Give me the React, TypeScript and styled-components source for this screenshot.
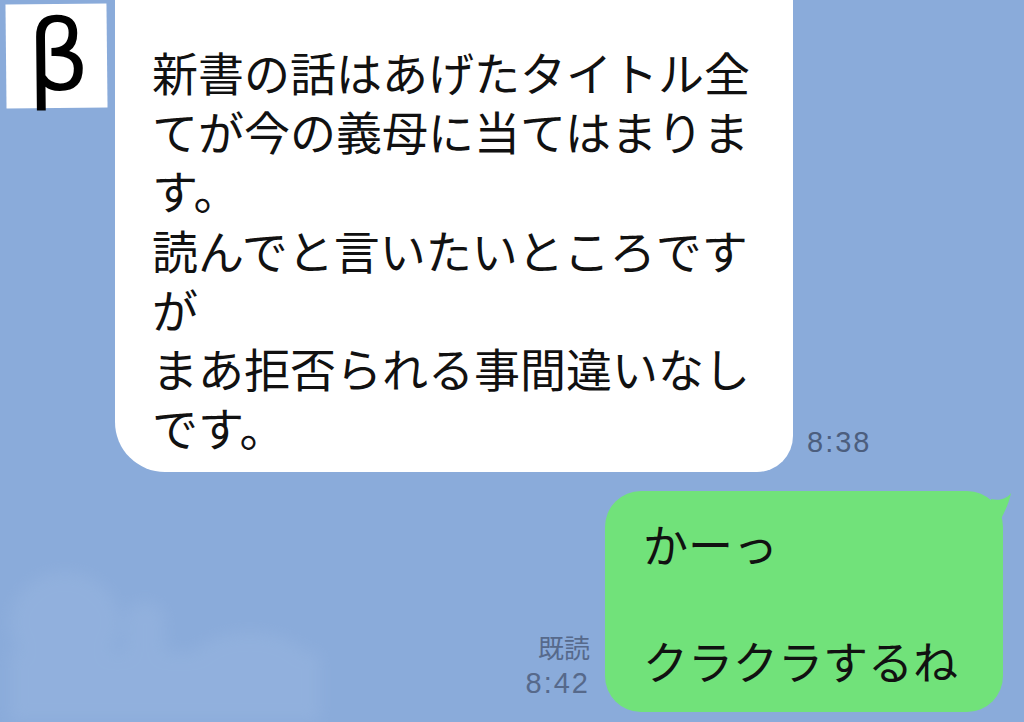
import * as React from "react";
import styled, { createGlobalStyle } from "styled-components";

const GlobalStyle = createGlobalStyle`
  html, body {
    margin: 0;
    padding: 0;
    background: #8aabda;
  }
  #root {
    width: 1024px;
    height: 722px;
  }
`;

const JP_FONT = `"Noto Sans CJK JP", "Noto Sans", sans-serif`;

const Chat = styled.div`
  position: relative;
  width: 1024px;
  height: 722px;
  overflow: hidden;
  background: #8aabda;
  display: flex;
  flex-direction: column;
  font-family: ${JP_FONT};
`;

const Clouds = styled.svg`
  position: absolute;
  left: 0;
  bottom: 0;
  pointer-events: none;
`;

const Row = styled.div<{ $mine?: boolean }>`
  position: relative;
  display: flex;
  align-items: flex-end;
  justify-content: ${(p) => (p.$mine ? "flex-end" : "flex-start")};
  padding: ${(p) => (p.$mine ? "19px 21px 0 0" : "0 0 0 6px")};
`;

const Avatar = styled.div`
  align-self: flex-start;
  margin-top: 4px;
  width: 101px;
  height: 104px;
  background: #fff;
  transform: rotate(-0.6deg);
  display: flex;
  align-items: center;
  justify-content: center;
  padding-left: 4px;
  box-sizing: border-box;
  font-family: "DejaVu Sans", sans-serif;
  font-size: 98px;
  line-height: 96px;
  color: #000;
`;

const Bubble = styled.div<{ $mine?: boolean }>`
  position: relative;
  box-sizing: border-box;
  white-space: pre;
  color: #111;
  background: ${(p) => (p.$mine ? "#71e27a" : "#ffffff")};
  font-size: ${(p) => (p.$mine ? "45px" : "46px")};
  line-height: ${(p) => (p.$mine ? "58.5px" : "59.2px")};
  width: ${(p) => (p.$mine ? "398px" : "678px")};
  padding: ${(p) => (p.$mine ? "24px 0 21px 38px" : "42px 0 16px 37px")};
  margin-left: ${(p) => (p.$mine ? "0" : "8px")};
  border-radius: ${(p) => (p.$mine ? "36px" : "0 0 36px 50px")};
`;

const Tail = styled.svg`
  position: absolute;
  right: -12px;
  top: 2px;
`;

const Meta = styled.div<{ $mine?: boolean }>`
  display: flex;
  flex-direction: column;
  align-items: flex-end;
  color: ${(p) => (p.$mine ? "#56698b" : "#4c5e7e")};
  margin: ${(p) => (p.$mine ? "0 15px 11px 0" : "0 0 12px 14px")};
`;

const ReadMark = styled.span`
  font-family: ${JP_FONT};
  font-size: 26px;
  line-height: 36px;
`;

const Time = styled.span`
  font-family: "Liberation Sans", Arial, sans-serif;
  font-size: 29px;
  letter-spacing: 2px;
  line-height: 36px;
`;

const received = `新書の話はあげたタイトル全
てが今の義母に当てはまりま
す。
読んでと言いたいところです
が
まあ拒否られる事間違いなし
です。`;

const sent = `かーっ

クラクラするね`;

export default function App() {
  return (
    <>
      <GlobalStyle />
      <Chat>
        <Clouds width="420" height="190" viewBox="0 0 420 190">
          <defs>
            <filter id="soft" x="-20%" y="-20%" width="140%" height="140%">
              <feGaussianBlur stdDeviation="8" />
            </filter>
          </defs>
          <g fill="#a2bde4" opacity="0.3" filter="url(#soft)">
            <ellipse cx="65" cy="90" rx="55" ry="50" />
            <rect x="125" y="70" width="40" height="120" rx="18" />
            <ellipse cx="250" cy="140" rx="65" ry="40" />
            <rect x="10" y="120" width="310" height="70" />
          </g>
        </Clouds>
        <Row>
          <Avatar>β</Avatar>
          <Bubble>{received}</Bubble>
          <Meta>
            <Time>8:38</Time>
          </Meta>
        </Row>
        <Row $mine>
          <Meta $mine>
            <ReadMark>既読</ReadMark>
            <Time>8:42</Time>
          </Meta>
          <Bubble $mine>
            {sent}
            <Tail width="24" height="26" viewBox="0 0 24 26">
              <path d="M0 6 C8 8 16 6 20 0 C18 10 14 18 10 26 L0 26 Z" fill="#71e27a" />
            </Tail>
          </Bubble>
        </Row>
      </Chat>
    </>
  );
}
